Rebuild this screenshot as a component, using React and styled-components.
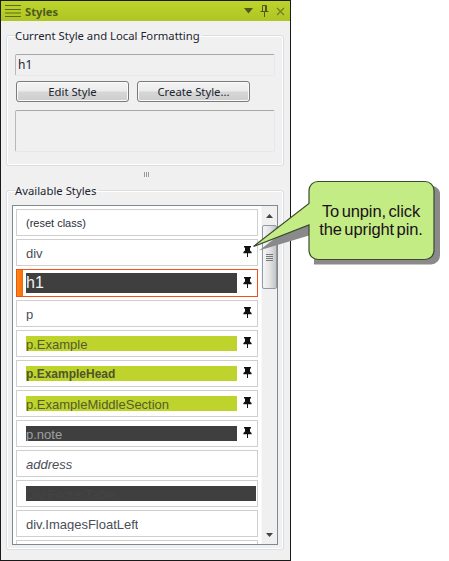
import React from "react";
import styled, { createGlobalStyle } from "styled-components";

const Global = createGlobalStyle`
  html, body { margin: 0; padding: 0; background: #fff; }
  * { box-sizing: border-box; }
`;
const Page = styled.div`
  position: relative;
  width: 449px;
  height: 561px;
  overflow: hidden;
  font-family: "Noto Sans", "Liberation Sans", sans-serif;
`;
const Panel = styled.div`
  width: 291px;
  height: 561px;
  border: 1px solid #1a1a1a;
  background: #f0f0f0;
  overflow: hidden;
`;
const TitleBar = styled.div`
  height: 20px;
  display: flex;
  align-items: center;
  padding: 0 4px;
  background: linear-gradient(#bdd42b, #afc524);
  color: #4c5a20;
`;
const TitleText = styled.span`
  font-size: 11.2px;
  font-weight: 700;
  margin-left: 4px;
  flex: 1;
`;
const TitleIcons = styled.div`
  display: flex;
  align-items: center;
  gap: 7px;
  margin-right: 1px;
`;
const Group = styled.fieldset`
  margin: ${p => p.$top}px 6px 0 5px;
  padding: ${p => p.$pad};
  border: 1px solid #d9dfe5;
  border-radius: 3px;
  box-shadow: inset 0 0 0 1px #fff;
  min-width: 0;
  height: ${p => p.$h}px;
`;
const Legend = styled.legend`
  margin-left: ${p => p.$indent}px;
  padding: 0 2px 0 0;
  font-size: 11.3px;
  line-height: 15px;
  color: #1c2530;
  white-space: nowrap;
`;
const ValueBox = styled.div`
  height: ${p => p.$h}px;
  border: 1px solid #c4c4c4;
  border-top-color: #a8a8a8;
  border-bottom-color: #e4e8ec;
  border-right-color: #e4e8ec;
  border-left-color: #b8b8b8;
  border-radius: 2px;
  padding-left: 2px;
  font-size: 12px;
  line-height: 20px;
  color: #1c2530;
`;
const ButtonRow = styled.div`
  display: flex;
  gap: 8px;
  margin: 5px 0 8px 1px;
`;
const Button = styled.div`
  width: 113px;
  height: 21px;
  border: 1px solid #7a7a7a;
  border-radius: 3px;
  background: linear-gradient(#f4f4f4 0%, #ececec 45%, #d6d6d6 55%, #cdcdcd 100%);
  box-shadow: inset 0 0 0 1px #fafafa;
  text-align: center;
  font-size: 11.3px;
  line-height: 19px;
  color: #1c2530;
`;
const Grip = styled.div`
  height: 17px;
  display: flex;
  align-items: center;
  justify-content: center;
  padding-left: 1px;
  gap: 1px;
`;
const GripBar = styled.i`
  width: 1px;
  height: 5px;
  background: #9a9a9a;
`;
const ListFrame = styled.div`
  height: 340px;
  border: 1px solid #808890;
  background: #f0f0f0;
  display: flex;
  overflow: hidden;
  box-shadow: inset 0 0 0 1px #fff;
`;
const List = styled.div`
  width: 248px;
  padding: 3px 0 0 3px;
  background: #fff;
  overflow: hidden;
  flex: none;
`;
const Row = styled.div`
  position: relative;
  height: ${p => p.$h || 27}px;
  width: 242px;
  margin-bottom: 3px;
  border: 1px solid ${p => (p.$current ? "#f0501a" : "#cfcfcf")};
  background: #fff;
  display: flex;
  align-items: center;
  padding-left: 9px;
  flex: none;
`;
const CurrentMark = styled.span`
  position: absolute;
  left: 0;
  top: 0;
  bottom: 0;
  width: 6px;
  background: linear-gradient(90deg, #ff8a10, #f86a08);
`;
const Label = styled.div`
  font-family: "Liberation Sans", Arial, sans-serif;
  font-size: ${p => p.$size || 13}px;
  font-weight: ${p => (p.$bold ? 700 : 400)};
  font-style: ${p => (p.$italic ? "italic" : "normal")};
  line-height: ${p => (p.$lh ? p.$lh : 17)}px;
  height: ${p => p.$lh || 15}px;
  width: ${p => p.$w || "auto"};
  flex: none;
  color: ${p => p.$color || "#4a4e58"};
  background: ${p => p.$bg || "transparent"};
  white-space: nowrap;
  overflow: hidden;
`;
const PinSlot = styled.svg`
  position: absolute;
  left: 226px;
  top: ${p => p.$top}px;
  display: block;
`;
const Scrollbar = styled.div`
  flex: 1;
  display: flex;
  flex-direction: column;
  align-items: center;
  border-left: 1px solid #f8f8f8;
  background: #f0f0f0;
`;
const ArrowBtn = styled.div`
  height: ${p => p.$h}px;
  display: flex;
  align-items: center;
  justify-content: center;
  flex: none;
`;
const Thumb = styled.div`
  width: 15px;
  height: 64px;
  flex: none;
  border: 1px solid #8f9aa5;
  border-radius: 2px;
  background: linear-gradient(90deg, #f6f6f6, #e4e4e4 50%, #c4c4c4);
  display: flex;
  flex-direction: column;
  align-items: center;
  justify-content: center;
  gap: 1px;
`;
const ThumbLine = styled.i`
  width: 7px;
  height: 1px;
  background: #777;
`;
const ScrollSpacer = styled.div`
  flex: 1;
`;
const Callout = styled.div`
  position: absolute;
  left: 250px;
  top: 176px;
  width: 195px;
  height: 92px;
`;
const CalloutText = styled.div`
  position: absolute;
  left: 54px;
  top: 26px;
  width: 134px;
  text-align: center;
  font-family: "Liberation Sans", Arial, sans-serif;
  font-size: 16.5px;
  line-height: 18px;
  letter-spacing: -0.1px;
  word-spacing: -2px;
  color: #1c1018;
`;

const Pin = ({ top }) => (
  <PinSlot $top={top} width="9" height="11" viewBox="0 0 9 11" fill="#111">
    <path d="M1 0h7v1.4H7V4.4l1.6 1.5v1.3H5V11H4V7.2H.4V5.9L2 4.4V1.4H1z" />
  </PinSlot>
);

const rows = [
  { t: "(reset class)", size: 11, color: "#2a2e38", pin: false },
  { t: "div", pin: true },
  { t: "h1", size: 16, current: true, bg: "#3f3f3f", color: "#f2f2f2", lh: 20, w: "211px", pin: true, h: 28 },
  { t: "p", pin: true },
  { t: "p.Example", bg: "#bed32c", color: "#555a30", w: "211px", pin: true },
  { t: "p.ExampleHead", bold: true, size: 12, bg: "#bed32c", color: "#4e5330", w: "211px", pin: true },
  { t: "p.ExampleMiddleSection", bg: "#bed32c", color: "#555a30", w: "211px", pin: true },
  { t: "p.note", bg: "#3f3f3f", color: "#a0a0a0", w: "211px", pin: true },
  { t: "address", italic: true },
  { t: "Div.FooterTable", bg: "#3f3f3f", color: "#444444", w: "230px" },
  { t: "div.ImagesFloatLeft" },
  { t: "", id: "clipped" },
];

export default function App() {
  return (
    <Page>
      <Global />
      <Panel>
        <TitleBar>
          <svg width="16" height="14" viewBox="0 0 16 14" stroke="#5a6a22" strokeWidth="1">
            <path d="M0 1.5h16M0 5.5h16M0 9h16M0 12.5h16" />
          </svg>
          <TitleText>Styles</TitleText>
          <TitleIcons>
            <svg width="9" height="6" viewBox="0 0 9 6" fill="#4c5a20"><path d="M0 0h9L4.5 5.5z" /></svg>
            <svg width="9" height="12" viewBox="0 0 9 12" fill="none" stroke="#4c5a20" strokeWidth="1">
              <path d="M2.5.5h4v6h-4zM5.5 1v5.5M.5 6.5h8M4.5 7v5" />
            </svg>
            <svg width="9" height="9" viewBox="0 0 9 9" fill="none" stroke="#6a7f28" strokeWidth="1.2">
              <path d="M1 1l7 7M8 1l-7 7" />
            </svg>
          </TitleIcons>
        </TitleBar>

        <Group $top={7} $pad="11px 8px 0 8px" $h={138}>
          <Legend $indent={0}>Current Style and Local Formatting</Legend>
          <ValueBox $h={22}>h1</ValueBox>
          <ButtonRow>
            <Button>Edit Style</Button>
            <Button>Create Style...</Button>
          </ButtonRow>
          <ValueBox $h={42} />
        </Group>

        <Grip><GripBar /><GripBar /><GripBar /></Grip>

        <Group $top={0} $pad="7px 5px 0 5px" $h={367}>
          <Legend $indent={3}>Available Styles</Legend>
          <ListFrame>
            <List>
              {rows.map(r => (
                <Row key={r.t || r.id} $current={r.current} $h={r.h}>
                  {r.current && <CurrentMark />}
                  <Label $size={r.size} $bold={r.bold} $italic={r.italic} $color={r.color} $bg={r.bg} $lh={r.lh} $w={r.w}>
                    {r.t}
                  </Label>
                  {r.pin && <Pin top={r.current ? 7 : 6} />}
                </Row>
              ))}
            </List>
            <Scrollbar>
              <ArrowBtn $h={19}>
                <svg width="7" height="4" viewBox="0 0 7 4" fill="#444"><path d="M3.5 0L7 4H0z" /></svg>
              </ArrowBtn>
              <Thumb>
                <ThumbLine /><ThumbLine /><ThumbLine /><ThumbLine />
              </Thumb>
              <ScrollSpacer />
              <ArrowBtn $h={19}>
                <svg width="7" height="4" viewBox="0 0 7 4" fill="#444"><path d="M0 0h7L3.5 4z" /></svg>
              </ArrowBtn>
            </Scrollbar>
          </ListFrame>
        </Group>
      </Panel>

      <Callout>
        <svg width="195" height="92" viewBox="0 0 195 92">
          <path
            d="M73 10.5h112a9 9 0 0 1 5 9v60a9 9 0 0 1-9 9H64V58L9 74.5 64 33V14.5z"
            fill="#8a8a8a"
          />
          <path
            d="M68 5.5h107a9 9 0 0 1 9 9v60a9 9 0 0 1-9 9H68a9 9 0 0 1-9-9V49L3.5 70.5 59 27.5V14.5a9 9 0 0 1 9-9z"
            fill="#c3ec85"
            stroke="#3c4a30"
            strokeWidth="1.2"
          />
        </svg>
        <CalloutText>To unpin, click<br />the upright pin.</CalloutText>
      </Callout>
    </Page>
  );
}
